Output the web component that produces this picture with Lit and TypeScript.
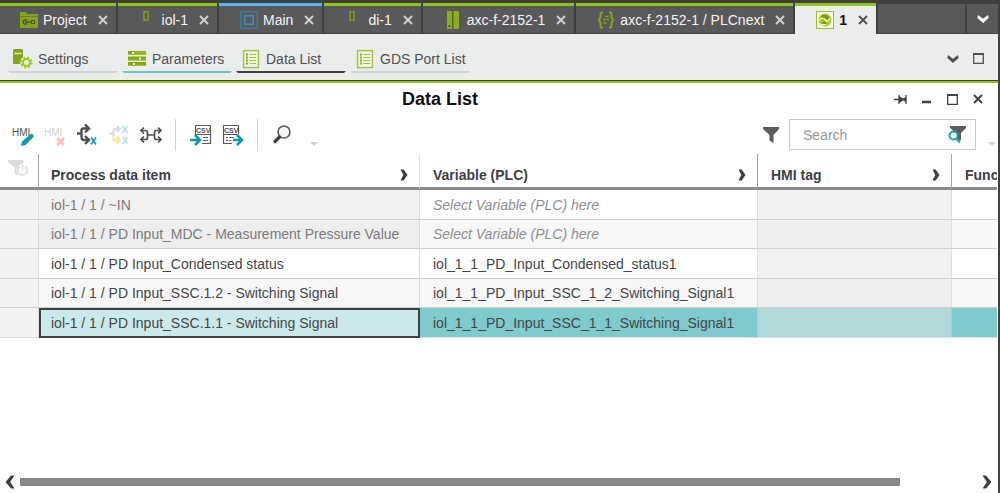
import { LitElement, html, css, svg, nothing } from "lit";
import { customElement, property, state } from "lit/decorators.js";
import { classMap } from "lit/directives/class-map.js";

const icons: Record<string, unknown> = {
  project: svg`<svg width="18" height="16" viewBox="0 0 18 16"><path d="M0 0h6l1 2h11v14H0z" fill="#86a51c"/><path d="M0 4.500h18" stroke="#6d7c35"/><path d="M7 8.500a2.200 2.200 0 1 0 0 3M5 10h6" fill="none" stroke="#4c5526" stroke-width="1.400"/><rect x="11.500" y="8.500" width="3" height="3" fill="none" stroke="#4c5526"/></svg>`,
  module: svg`<svg width="18" height="18" viewBox="0 0 18 18"><rect x="5" y=".7" width="4" height="8.500" fill="none" stroke="#86a51c" stroke-width="1.400"/></svg>`,
  main: svg`<svg width="18" height="18" viewBox="0 0 18 18"><rect x=".8" y=".8" width="16.400" height="16.400" fill="none" stroke="#3f819e" stroke-width="1.200"/><rect x="4.800" y="4.800" width="8.400" height="8.400" fill="none" stroke="#3f8fb4" stroke-width="1.600"/></svg>`,
  plc: svg`<svg width="18" height="18" viewBox="0 0 18 18"><path d="M3 0h5v18H3zM9.500 0H15v18H9.500z" fill="#8bb012"/><path d="M4.500 15h2" stroke="#4c5526" stroke-width="2"/></svg>`,
  plcnext: svg`<svg width="18" height="18" viewBox="0 0 18 18" fill="none" stroke="#86a51c"><path d="M6 1.500H4.500Q3.500 1.500 3.500 3v3.500L1.800 9l1.700 2.500V15q0 1.500 1 1.500H6M12 1.500h1.500q1 0 1 1.500v3.500L16.200 9l-1.700 2.500V15q0 1.500-1 1.500H12" stroke-width="2"/><path d="M8.500 5.500h3M6 8.500h2.500M9.500 8.500H12M6.500 12h3" stroke-width="1.400"/></svg>`,
  device: svg`<svg width="18" height="18" viewBox="0 0 18 18"><rect x=".5" y=".5" width="17" height="17" fill="#f7fbe6" stroke="#9dbd32"/><circle cx="9" cy="9" r="6.500" fill="#a4cb1d"/><path d="M4 6q4-4 8-1l2 3-3 1-2-2zM5 12l3-2 4 3q-4 3-7-1z" fill="#769a0c"/><path d="M3 9.500c2-3 4-3 6-1l2 2 3-3M5 13c2 1 4 1 6 0" fill="none" stroke="#f1f7d5" stroke-width="1.300"/></svg>`,
  settings: svg`<svg width="20" height="20" viewBox="0 0 20 20"><rect x="0" y="0" width="10" height="15" rx="1.500" fill="#86a51c"/><path d="M1.500 4.500h7" stroke="#dbe9ad" stroke-width="1.600"/><circle cx="13.500" cy="13.500" r="6.200" fill="#ebedec"/><circle cx="13.500" cy="13.500" r="4.900" fill="none" stroke="#9ccb10" stroke-width="2.200" stroke-dasharray="2 1.850"/><circle cx="13.500" cy="13.500" r="3.500" fill="none" stroke="#9ccb10" stroke-width="2"/></svg>`,
  parameters: svg`<svg width="20" height="20" viewBox="0 0 20 20"><path d="M1 2h18v4H1zM1 7.500h18v4H1zM1 13h18v4H1z" fill="#86a51c"/><path d="M1 5.500h4M7 3.500h12v2H7M1 11h9M13 11h6M1 16.500h4M8 16.500h11" stroke="#9ccb10" fill="none" stroke-width="1"/><path d="M5 3h2v2H5zM12 8.500h2v2h-2zM6 14h2v2H6z" fill="#eef3dc"/></svg>`,
  list: svg`<svg width="20" height="20" viewBox="0 0 20 20"><rect x="2.600" y="1.600" width="14.800" height="17" fill="#f1f5e3" stroke="#a3bf3f" stroke-width="1.400"/><path d="M5 5.500h2M5 8.500h2M5 11.500h2M5 14.500h2" stroke="#8bb012" stroke-width="2"/><path d="M8.500 5.500H15M8.500 8.500H15M8.500 11.500H15M8.500 14.500H15" stroke="#a3bf3f" stroke-width="1.200"/></svg>`,
  close: svg`<svg width="10" height="10" viewBox="0 0 10 10"><path d="M1 1l8 8M9 1L1 9" fill="none" stroke="currentColor" stroke-width="1.900"/></svg>`,
  down: svg`<svg width="12" height="8" viewBox="0 0 12 8"><path d="M1 0l5 3.800L11 0l.6 3L6 8 .4 3z" fill="currentColor"/></svg>`,
  right: svg`<svg width="8" height="12" viewBox="0 0 8 12"><path d="M.5.500h3.200L7.500 6 3.700 11.500H.5l2.800-5.500z" fill="currentColor"/></svg>`,
  left: svg`<svg width="10" height="14" viewBox="0 0 10 14"><path d="M9.500.5H6L.5 7 6 13.500h3.500L5.200 7z" fill="currentColor"/></svg>`,
  forward: svg`<svg width="10" height="14" viewBox="0 0 10 14"><path d="M.5.5H4L9.500 7 4 13.500H.5L4.800 7z" fill="currentColor"/></svg>`,
  maximize: svg`<svg width="11" height="11" viewBox="0 0 11 11"><path d="M.7.700h9.600v9.600H.7z" fill="none" stroke="currentColor" stroke-width="1.300"/><path d="M0 1h11" stroke="currentColor" stroke-width="2"/></svg>`,
  minimize: svg`<svg width="10" height="11" viewBox="0 0 10 11"><path d="M0 8h9" stroke="currentColor" stroke-width="2.500"/></svg>`,
  pin: svg`<svg width="13" height="11" viewBox="0 0 13 11"><path d="M0 5.500h5M5 1v9M12 1v9" fill="none" stroke="currentColor" stroke-width="1.300"/><path d="M5 2l4 2.500L12 3v5L9 6.500 5 9z" fill="currentColor"/></svg>`,
  hmiEdit: svg`<svg width="22" height="24" viewBox="0 0 22 24"><text x="0" y="13" class="glyph">HMI</text><path d="M9 23l1-4.500 8.500-7.500q1.500-.5 2.500.5t.5 2.500L13.500 22z" fill="#0e9aa7"/></svg>`,
  hmiDelete: svg`<svg width="22" height="24" viewBox="0 0 22 24"><text x="0" y="13" class="glyph faint">HMI</text><path d="M13 15l7 7M20 15l-7 7" stroke="#f7c3b4" stroke-width="2.800"/></svg>`,
  assign: svg`<svg width="22" height="24" viewBox="0 0 22 24"><g fill="none" stroke="#505052" stroke-width="2.400"><path d="M1 10.500h4M13 5.500H7.500q-2 0-2 2v6q0 3.500 2.500 3.500H13M9 1.500l4 4-4 4M9 13l4 4-4 4"/></g><path d="M15 14.500l5 7M20 14.500l-5 7" stroke="#1a9faa" stroke-width="1.900"/></svg>`,
  assignAll: svg`<svg width="22" height="24" viewBox="0 0 22 24"><g fill="none" stroke="#dcdcdc" stroke-width="2.200"><path d="M1 10.500h4M12 6H7.500q-2 0-2 2v5M9 3l3 3-3 3"/></g><path d="M5.500 13.500v3.500H12M8.500 13.500l3.500 3.500-3.500 3.500" fill="none" stroke="#f4e6a2" stroke-width="2.400"/><path d="M14.500 3l5 7M19.500 3l-5 7M14.500 14l5 7M19.500 14l-5 7" stroke="#bfe5e8" stroke-width="2"/></svg>`,
  connect: svg`<svg width="22" height="24" viewBox="0 0 22 24"><g fill="none" stroke="#505052" stroke-width="1.700"><path d="M1 7.500h4.500q2 0 2 2v5q0 2-2 2H1M4 4.500l-3 3 3 3M4 13.500l-3 3 3 3M7.500 12h7M21 7.500h-4.500q-2 0-2 2v5q0 2 2 2H21M18 4.500l3 3-3 3M18 13.500l3 3-3 3"/></g></svg>`,
  csvIn: svg`<svg width="22" height="24" viewBox="0 0 22 24"><path d="M5.500 12V2.500h15v18H12" fill="none" stroke="#5a5a5c" stroke-width="1.200"/><text x="6" y="10" class="mini">CSV</text><path d="M6 11.500h14M13 14.500h5M13 17.500h5" stroke="#5a5a5c"/><path d="M0 17h9M5 12l5 5-5 5" fill="none" stroke="#0e9aa7" stroke-width="2.600"/></svg>`,
  csvOut: svg`<svg width="22" height="24" viewBox="0 0 22 24"><path d="M16.500 11V2.500H1.500v18H10" fill="none" stroke="#5a5a5c" stroke-width="1.200"/><text x="2" y="10" class="mini">CSV</text><path d="M2 11.500h14M4 14.500h2M7 14.500h5M4 17.500h2M7 17.500h2" stroke="#5a5a5c"/><path d="M11 17h8M15 12l5 5-5 5" fill="none" stroke="#0e9aa7" stroke-width="2.600"/></svg>`,
  magnifier: svg`<svg width="20" height="24" viewBox="0 0 20 24"><circle cx="12" cy="9" r="6" fill="#f4f4f4" stroke="#5a5a5c" stroke-width="1.600"/><path d="M7.500 14L3 18.500" stroke="#404042" stroke-width="3.200" stroke-linecap="round"/></svg>`,
  more: svg`<svg width="8" height="4" viewBox="0 0 8 4"><path d="M0 0h8L4 4z" fill="#cfd3d5"/></svg>`,
  funnel: svg`<svg width="16" height="16" viewBox="0 0 16 16"><path d="M0 0h16v2l-5.500 6v8l-4-2.500V8L0 2z" fill="#5d5d5f"/></svg>`,
  funnelSearch: svg`<svg width="18" height="18" viewBox="0 0 18 18"><path d="M2 0h16v2l-5 5v7H8V7L2 2z" fill="#5d5d5f"/><circle cx="5.500" cy="9.500" r="4" fill="#fff" stroke="#1aa3ae" stroke-width="2"/><path d="M8.500 12.500l3.500 4" stroke="#1aa3ae" stroke-width="2.500"/></svg>`,
  funnelOff: svg`<svg width="20" height="18" viewBox="0 0 20 18"><path d="M0 0h15.500v2L10.500 7v9l-4-2.500V7L0 2z" fill="#d9dbdc"/><circle cx="14.500" cy="10.500" r="6" fill="#fff"/><path d="M12 6.500a4.600 4.600 0 1 0 5 0M14.500 5v5" fill="none" stroke="#d9dbdc" stroke-width="1.500"/></svg>`,
};

const shared = css`
  * { box-sizing: border-box; }
  button {
    display: inline-flex;
    align-items: center;
    justify-content: center;
    padding: 0;
    border: 0;
    background: none;
    color: inherit;
    font: inherit;
    flex: none;
  }
  svg { display: block; flex: none; }
`;

interface Tab { icon: string; label: string; accent?: string; }

@customElement("editor-tabs")
class EditorTabs extends LitElement {
  static styles = [shared, css`
    :host { display: flex; background: #404042; padding: 3px 2px 1px 0; gap: 2px; height: 34px; }
    .tab {
      display: flex;
      align-items: center;
      border-top: 3px solid #8fc614;
      background: #59595b;
      color: #f4f4f4;
      padding-right: 8px;
      white-space: nowrap;
    }
    .pick { gap: 5px; padding: 0 11px 0 21px; height: 100%; }
    .cross { color: #d2d2d2; }
    .tab:first-child .pick { padding-left: 20px; }
    .tab.blue { border-color: #5bb8ec; }
    .tab.active { background: #ebedec; color: #111; font-weight: bold; margin-bottom: -1px; }
    .active .cross { color: #505052; }
    .rest { flex: 1; background: #59595b; }
    .menu { width: 31px; background: #59595b; color: #fff; }
    .rest, .menu { margin-top: 1px; }
  `];
  @property({ attribute: false }) tabs: Tab[] = [];
  @state() active = 6;
  render() {
    return html`
      ${this.tabs.map((t, i) => html`
        <div class=${classMap({ tab: true, blue: t.accent === "blue", active: i === this.active })}>
          <button class="pick" @click=${() => (this.active = i)}>${icons[t.icon]}<span>${t.label}</span></button>
          <button class="cross">${icons.close}</button>
        </div>`)}
      <div class="rest"></div>
      <button class="menu">${icons.down}</button>`;
  }
}

@customElement("view-bar")
class ViewBar extends LitElement {
  static styles = [shared, css`
    :host {
      display: flex;
      align-items: flex-start;
      gap: 4px;
      height: 49px;
      padding: 10px 14px 0 8px;
      background: #ebedec;
      border-bottom: 2px solid #8fc614;
      box-shadow: inset 0 -1px #404042;
      color: #505052;
    }
    .space { flex: 1; }
    .view { height: 29px; min-width: 110px; flex-direction: column; align-items: stretch; }
    .row { display: flex; align-items: center; gap: 5px; flex: 1; padding: 2px 5px 0; }
    .line { height: 2px; background: #cfd2d6; clip-path: polygon(0 0, 100% 0, calc(100% - 2px) 100%, 2px 100%); }
    .teal { background: #72bfc6; }
    .dark { background: #404042; }
    .tools { display: flex; gap: 14px; height: 29px; align-items: center; }
  `];
  render() {
    const views = [
      ["settings", "Settings", ""],
      ["parameters", "Parameters", "teal"],
      ["list", "Data List", "dark"],
      ["list", "GDS Port List", ""],
    ];
    return html`
      ${views.map(([icon, label, tone]) => html`
        <button class="view">
          <span class="row">${icons[icon]}<span>${label}</span></span>
          <span class="line ${tone}"></span>
        </button>`)}
      <span class="space"></span>
      <div class="tools"><button>${icons.down}</button><button>${icons.maximize}</button></div>`;
  }
}

interface Row { item: string; variable: string; readonly?: boolean; }

@customElement("data-grid")
class DataGrid extends LitElement {
  static styles = [shared, css`
    :host { display: block; overflow: hidden; margin-right: 1px; }
    table { width: 100%; table-layout: fixed; border-collapse: separate; border-spacing: 0; white-space: nowrap; }
    .c0 { width: 39px; }
    .c1 { width: 381px; }
    .c2 { width: 338px; }
    .c3 { width: 194px; }
    th {
      height: 36px;
      padding: 8px 11px 0 12px;
      text-align: left;
      color: #404042;
      border-bottom: 3px solid #8a8a8c;
      border-right: 1px solid #a2a2a4;
      overflow: hidden;
    }
    th:nth-child(2) { border-right-color: #e3e3e3; }
    th:first-child { padding: 0 0 0 8px; }
    th:nth-child(n + 3), td:nth-child(n + 3) { padding-left: 13px; }
    th:last-child, td:last-child { border-right: 0; padding-right: 0; }
    .head { display: flex; align-items: center; justify-content: space-between; }
    td {
      height: 30px;
      padding: 0 12px;
      border-right: 1px solid #dcdcdc;
      border-bottom: 1px solid #cfcfcf;
      color: #454547;
    }
    tr:nth-child(even) td { height: 29px; background: #f7f7f7; }
    tbody td:first-child, tbody tr:nth-child(even) td:first-child { background: #f2f2f2; }
    td.off { background: #f1f1f1; color: #7a7a7c; }
    tr:nth-child(even) td.off { background: #eeeeee; }
    .hint { font-style: italic; color: #8e8e90; }
    tr.selected td { background: #7ecacd; border-bottom-color: #dcdcdc; }
    tr.selected td:first-child { background: #f2f2f2; }
    tr.selected td.off { background: #b1d9da; }
    tr.selected td.focus { background: #cbe9ea; outline: 2px solid #404042; outline-offset: -2px; }
    tr.selected td:nth-child(n + 3) { border-right-color: #a9cccd; }
    tr.selected td.focus { border-right-color: #404042; }
  `];
  @property({ attribute: false }) rows: Row[] = [];
  @state() selected = 4;
  render() {
    return html`
      <table>
        <colgroup><col class="c0"><col class="c1"><col class="c2"><col class="c3"><col></colgroup>
        <thead><tr>
          <th><button>${icons.funnelOff}</button></th>
          ${["Process data item", "Variable (PLC)", "HMI tag"].map((h) => html`
            <th><div class="head"><span>${h}</span><button>${icons.right}</button></div></th>`)}
          <th>Func</th>
        </tr></thead>
        <tbody>
          ${this.rows.map((r, i) => html`
            <tr class=${i === this.selected ? "selected" : nothing} @click=${() => (this.selected = i)}>
              <td></td>
              <td class=${classMap({ off: !!r.readonly, focus: i === this.selected })}>${r.item}</td>
              <td>${r.variable ? r.variable : html`<span class="hint">Select Variable (PLC) here</span>`}</td>
              <td class="off"></td>
              <td></td>
            </tr>`)}
        </tbody>
      </table>`;
  }
}

@customElement("app-root")
class AppRoot extends LitElement {
  static styles = [shared, css`
    :host {
      display: flex;
      flex-direction: column;
      min-height: 100vh;
      background: #fff;
      font: 14px/18px "Liberation Sans", Arial, sans-serif;
      color: #404042;
    }
    .body { flex: 1; display: flex; flex-direction: column; border-right: 2px solid #404042; }
    .title { display: flex; align-items: center; height: 32px; padding-right: 15px; }
    h1 { flex: 1; margin: 0; text-align: center; font-size: 18px; line-height: 24px; color: #111; }
    .window { display: flex; justify-content: space-between; width: 89px; margin-left: 14px; }
    .toolbar { display: flex; align-items: center; height: 39px; padding: 0 2px 0 12px; gap: 10px; }
    .glyph { font-size: 10px; fill: #505052; }
    .glyph.faint { fill: #d2d2d4; }
    .mini { font-size: 7px; font-weight: bold; fill: #505052; }
    .sep { width: 1px; height: 32px; background: #cfd2d4; margin: 0 4px 0 3px; }
    .more { align-self: flex-end; padding-bottom: 8px; }
    .wide { margin-right: 8px; display: flex; }
    .space { flex: 1; }
    .search {
      display: flex;
      align-items: center;
      width: 187px;
      height: 31px;
      border: 1px solid #c3c9cc;
      padding: 0 9px 0 13px;
      margin-right: 2px;
    }
    input {
      flex: 1;
      min-width: 0;
      padding: 0;
      border: 0;
      outline: 0;
      background: none;
      font: inherit;
      color: inherit;
    }
    input::placeholder { color: #98989a; opacity: 1; }
    .grid { flex: 1; }
    .scroll { display: flex; align-items: center; gap: 5px; height: 22px; padding: 0 6px 0 5px; }
    .track { flex: 1; height: 8px; }
    .thumb { height: 8px; background: #868889; }
  `];
  tabs: Tab[] = [
    { icon: "project", label: "Project" },
    { icon: "module", label: "iol-1" },
    { icon: "main", label: "Main", accent: "blue" },
    { icon: "module", label: "di-1" },
    { icon: "plc", label: "axc-f-2152-1" },
    { icon: "plcnext", label: "axc-f-2152-1 / PLCnext" },
    { icon: "device", label: "1" },
  ];
  rows: Row[] = [
    { item: "iol-1 / 1 / ~IN", variable: "", readonly: true },
    { item: "iol-1 / 1 / PD Input_MDC - Measurement Pressure Value", variable: "", readonly: true },
    { item: "iol-1 / 1 / PD Input_Condensed status", variable: "iol_1_1_PD_Input_Condensed_status1" },
    { item: "iol-1 / 1 / PD Input_SSC.1.2 - Switching Signal", variable: "iol_1_1_PD_Input_SSC_1_2_Switching_Signal1" },
    { item: "iol-1 / 1 / PD Input_SSC.1.1 - Switching Signal", variable: "iol_1_1_PD_Input_SSC_1_1_Switching_Signal1" },
  ];
  @state() thumb = 92;
  render() {
    const tool = (name: string) => html`<button>${icons[name]}</button>`;
    return html`
      <editor-tabs .tabs=${this.tabs}></editor-tabs>
      <div class="body">
        <view-bar></view-bar>
        <div class="title">
          <h1>Data List</h1>
          <div class="window">${["pin", "minimize", "maximize", "close"].map(tool)}</div>
        </div>
        <div class="toolbar">
          ${["hmiEdit", "hmiDelete", "assign", "assignAll", "connect"].map(tool)}
          <span class="sep"></span>
          ${["csvIn", "csvOut"].map(tool)}
          <span class="sep"></span>
          <span class="wide">${tool("magnifier")}</span>
          <button class="more">${icons.more}</button>
          <span class="space"></span>
          ${tool("funnel")}
          <label class="search"><input type="text" placeholder="Search" aria-label="Search"><button>${icons.funnelSearch}</button></label>
          <button class="more">${icons.more}</button>
        </div>
        <data-grid class="grid" .rows=${this.rows}></data-grid>
        <div class="scroll">
          ${tool("left")}
          <div class="track"><div class="thumb" style="width:${this.thumb}%"></div></div>
          ${tool("forward")}
        </div>
      </div>`;
  }
}
